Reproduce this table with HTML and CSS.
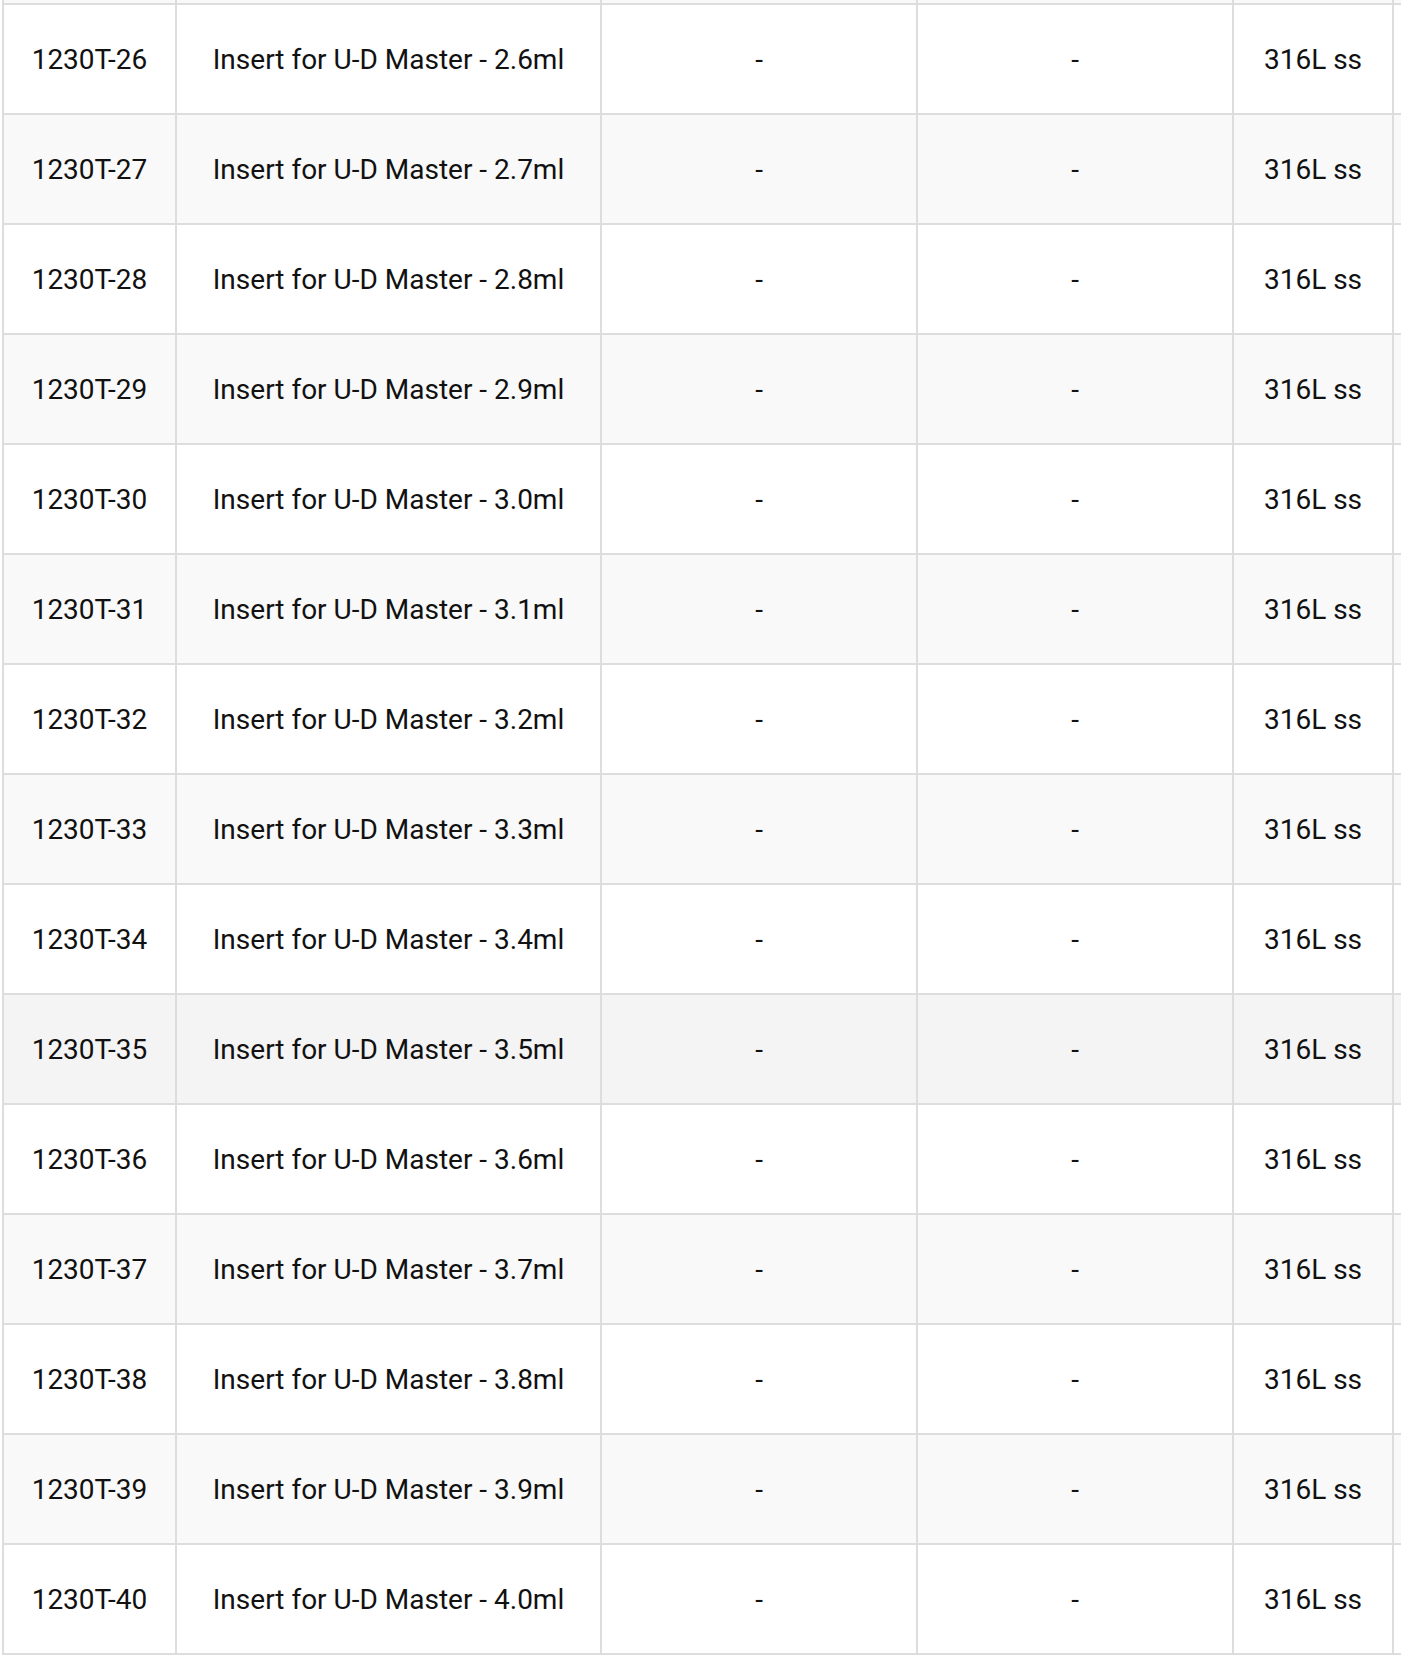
FILE: index.html
```html
<!DOCTYPE html>
<html>
<head>
<meta charset="utf-8">
<link rel="stylesheet" href="styles.css">
</head>
<body>
<div class="wrap">
<table class="parts">
<tbody>
<tr class="alt prev"><td></td><td></td><td></td><td></td><td></td><td></td></tr>
<tr><td>1230T-26</td><td>Insert for U-D Master - 2.6ml</td><td>-</td><td>-</td><td>316L ss</td><td></td></tr>
<tr class="alt"><td>1230T-27</td><td>Insert for U-D Master - 2.7ml</td><td>-</td><td>-</td><td>316L ss</td><td></td></tr>
<tr><td>1230T-28</td><td>Insert for U-D Master - 2.8ml</td><td>-</td><td>-</td><td>316L ss</td><td></td></tr>
<tr class="alt"><td>1230T-29</td><td>Insert for U-D Master - 2.9ml</td><td>-</td><td>-</td><td>316L ss</td><td></td></tr>
<tr><td>1230T-30</td><td>Insert for U-D Master - 3.0ml</td><td>-</td><td>-</td><td>316L ss</td><td></td></tr>
<tr class="alt"><td>1230T-31</td><td>Insert for U-D Master - 3.1ml</td><td>-</td><td>-</td><td>316L ss</td><td></td></tr>
<tr><td>1230T-32</td><td>Insert for U-D Master - 3.2ml</td><td>-</td><td>-</td><td>316L ss</td><td></td></tr>
<tr class="alt"><td>1230T-33</td><td>Insert for U-D Master - 3.3ml</td><td>-</td><td>-</td><td>316L ss</td><td></td></tr>
<tr><td>1230T-34</td><td>Insert for U-D Master - 3.4ml</td><td>-</td><td>-</td><td>316L ss</td><td></td></tr>
<tr class="hover"><td>1230T-35</td><td>Insert for U-D Master - 3.5ml</td><td>-</td><td>-</td><td>316L ss</td><td></td></tr>
<tr><td>1230T-36</td><td>Insert for U-D Master - 3.6ml</td><td>-</td><td>-</td><td>316L ss</td><td></td></tr>
<tr class="alt"><td>1230T-37</td><td>Insert for U-D Master - 3.7ml</td><td>-</td><td>-</td><td>316L ss</td><td></td></tr>
<tr><td>1230T-38</td><td>Insert for U-D Master - 3.8ml</td><td>-</td><td>-</td><td>316L ss</td><td></td></tr>
<tr class="alt"><td>1230T-39</td><td>Insert for U-D Master - 3.9ml</td><td>-</td><td>-</td><td>316L ss</td><td></td></tr>
<tr><td>1230T-40</td><td>Insert for U-D Master - 4.0ml</td><td>-</td><td>-</td><td>316L ss</td><td></td></tr>
</tbody>
</table>
</div>
</body>
</html>
```

FILE: styles.css
```css
html, body {
  margin: 0;
  padding: 0;
  background: #fff;
  overflow: hidden;
}
.wrap {
  padding-left: 2px;
  height: 1659px;
  overflow: hidden;
}
.parts {
  border-collapse: collapse;
  table-layout: fixed;
  width: 1700px;
  margin-top: -107px;
  font-family: Roboto, "Noto Sans", sans-serif;
  font-size: 28px;
  color: #111;
}
.parts td {
  border: 2px solid #dddddd;
  padding: 0;
  height: 108px;
  text-align: center;
  vertical-align: middle;
  white-space: nowrap;
}
.parts td:nth-child(1) { width: 171px; }
.parts td:nth-child(2) { width: 423px; }
.parts td:nth-child(3) { width: 314px; }
.parts td:nth-child(4) { width: 314px; }
.parts td:nth-child(5) { width: 158px; }
.parts tr.alt { background: #f9f9f9; }
.parts tr.hover { background: #f4f4f4; }
```
